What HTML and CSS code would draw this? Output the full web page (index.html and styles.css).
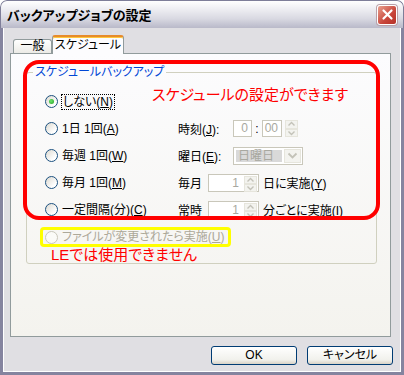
FILE: index.html
```html
<!DOCTYPE html>
<html lang="ja">
<head>
  <meta charset="UTF-8">
  <title>バックアップジョブの設定</title>
  <link rel="stylesheet" href="styles.css">
</head>
<body>
  <div class="window">
    <div class="titlebar">
      <span class="title">バックアップジョブの設定</span>
      <span class="close">
        <svg width="17" height="17" viewBox="0 0 17 17"><path d="M4.5 4.5 L12.5 12.5 M12.5 4.5 L4.5 12.5" stroke="#fff" stroke-width="2.2" stroke-linecap="round"/></svg>
      </span>
    </div>

    <div class="frame">
      <div class="tabs">
        <div class="tab">一般</div>
        <div class="tab tab-active">スケジュール</div>
      </div>

      <div class="panel">
        <fieldset class="group">
          <legend>スケジュールバックアップ</legend>

          <div class="rows">
            <div class="row">
              <label class="option"><span class="radio checked"></span><span class="focus">しない(<u>N</u>)</span></label>
              <span class="note-red">スケジュールの設定ができます</span>
            </div>

            <div class="row">
              <label class="option col-left"><span class="radio"></span><span>1日 1回(<u>A</u>)</span></label>
              <span class="field-label">時刻(<u>J</u>):</span>
              <span class="box time-h">0</span>
              <span class="colon">:</span>
              <span class="box time-m">00</span>
              <span class="spinner spinner-alone">
                <span class="spin-btn"><svg width="9" height="6" viewBox="0 0 9 6"><path d="M1.5 4.5 L4.5 1.5 L7.5 4.5" fill="none" stroke="#c3c2b8" stroke-width="1.4"/></svg></span>
                <span class="spin-btn"><svg width="9" height="6" viewBox="0 0 9 6"><path d="M1.5 1.5 L4.5 4.5 L7.5 1.5" fill="none" stroke="#c3c2b8" stroke-width="1.4"/></svg></span>
              </span>
            </div>

            <div class="row">
              <label class="option col-left"><span class="radio"></span><span>毎週 1回(<u>W</u>)</span></label>
              <span class="field-label">曜日(<u>E</u>):</span>
              <span class="combo">
                <span class="combo-text">日曜日</span>
                <span class="combo-btn"><svg width="11" height="7" viewBox="0 0 11 7"><path d="M1.5 1.5 L5.5 5.5 L9.5 1.5" fill="none" stroke="#c3c2b8" stroke-width="1.8"/></svg></span>
              </span>
            </div>

            <div class="row">
              <label class="option col-left"><span class="radio"></span><span>毎月 1回(<u>M</u>)</span></label>
              <span class="field-label short">毎月</span>
              <span class="spin">
                <span class="spin-value">1</span>
                <span class="spinner">
                  <span class="spin-btn"><svg width="9" height="6" viewBox="0 0 9 6"><path d="M1.5 4.5 L4.5 1.5 L7.5 4.5" fill="none" stroke="#c3c2b8" stroke-width="1.4"/></svg></span>
                  <span class="spin-btn"><svg width="9" height="6" viewBox="0 0 9 6"><path d="M1.5 1.5 L4.5 4.5 L7.5 1.5" fill="none" stroke="#c3c2b8" stroke-width="1.4"/></svg></span>
                </span>
              </span>
              <span class="after">日に実施(<u>Y</u>)</span>
            </div>

            <div class="row">
              <label class="option col-left"><span class="radio"></span><span>一定間隔(分)(<u>C</u>)</span></label>
              <span class="field-label short">常時</span>
              <span class="spin">
                <span class="spin-value">1</span>
                <span class="spinner">
                  <span class="spin-btn"><svg width="9" height="6" viewBox="0 0 9 6"><path d="M1.5 4.5 L4.5 1.5 L7.5 4.5" fill="none" stroke="#c3c2b8" stroke-width="1.4"/></svg></span>
                  <span class="spin-btn"><svg width="9" height="6" viewBox="0 0 9 6"><path d="M1.5 1.5 L4.5 4.5 L7.5 1.5" fill="none" stroke="#c3c2b8" stroke-width="1.4"/></svg></span>
                </span>
              </span>
              <span class="after">分ごとに実施(<u>I</u>)</span>
            </div>
          </div>

          <div class="hl-yellow">
            <label class="option disabled"><span class="radio"></span><span>ファイルが変更されたら実施(<u>U</u>)</span></label>
          </div>
          <div class="note-le">LEでは使用できません</div>
        </fieldset>

        <div class="hl-red"></div>
      </div>

      <div class="buttons">
        <button class="btn">OK</button>
        <button class="btn">キャンセル</button>
      </div>
    </div>
  </div>
</body>
</html>
```

FILE: styles.css
```css
* { box-sizing: border-box; }
body {
  margin: 0;
  background: #fff;
  font-family: "Liberation Sans", "Noto Sans CJK JP", sans-serif;
  font-size: 12px;
  font-feature-settings: "palt";
  color: #000;
}
.window {
  width: 404px;
  height: 375px;
  display: flex;
  flex-direction: column;
  background: #e0dfe3;
  border-radius: 7px 7px 0 0;
  overflow: hidden;
}
.titlebar {
  height: 28px;
  flex: none;
  display: flex;
  align-items: center;
  justify-content: space-between;
  padding: 0 6px 0 6px;
  border: 1px solid #7e7e99;
  border-bottom: none;
  border-radius: 7px 7px 0 0;
  background: linear-gradient(#ffffff 0%, #ebebf0 35%, #d9d9e2 65%, #b9b9c9 100%);
}
.title {
  font-size: 13px;
  font-weight: bold;
}
.close {
  width: 20px;
  height: 20px;
  display: flex;
  align-items: center;
  justify-content: center;
  border: 1px solid #fff;
  border-radius: 3px;
  background: linear-gradient(135deg, #e9a08e, #c8453a 60%, #b53128);
  box-shadow: 0 0 0 1px #b8a0a8;
}
.frame {
  flex: 1;
  display: flex;
  flex-direction: column;
  border: 3px solid #85849f;
  border-top: none;
  box-shadow: inset 1px 0 #fff, inset -1px 0 #fff, inset 0 -1px #fff;
  padding: 7px 10px 0 7px;
}
.tabs {
  height: 18px;
  display: flex;
  align-items: flex-end;
  padding-left: 3px;
}
.tab {
  width: 39px;
  height: 14px;
  border: 1px solid #919b9c;
  border-bottom: none;
  border-radius: 3px 3px 0 0;
  background: linear-gradient(#ffffff, #ecebe6);
  text-align: center;
  line-height: 13px;
}
.tab-active {
  position: relative;
  z-index: 1;
  width: 72px;
  height: 19px;
  margin-bottom: -1px;
  border-top: 2px solid #e68b2c;
  box-shadow: inset 0 1px #ffc83c;
  background: #fcfcfe;
  line-height: 16px;
}
.panel {
  position: relative;
  height: 284px;
  border: 1px solid #919b9c;
  background: linear-gradient(#fcfcfe, #f4f3ee);
  padding: 11px 13px 0 15px;
}
.group {
  margin: 0;
  padding: 0;
  height: 199px;
  border: 1px solid #d0d0bf;
  border-radius: 3px;
}
.group legend {
  margin-left: 6px;
  padding: 0 2px;
  line-height: 14px;
  color: #0046d5;
}
.rows {
  padding: 9px 0 0 18px;
}
.row {
  height: 27px;
  display: flex;
  align-items: center;
  white-space: nowrap;
}
.option {
  display: flex;
  align-items: center;
  gap: 4px;
  line-height: 14px;
  white-space: nowrap;
}
.col-left {
  width: 133px;
  flex: none;
}
.radio {
  width: 13px;
  height: 13px;
  flex: none;
  position: relative;
  border: 1px solid #1c5180;
  border-radius: 50%;
  background: linear-gradient(135deg, #dcd9d0, #ffffff 75%);
}
.radio.checked::after {
  content: "";
  position: absolute;
  left: 3px;
  top: 3px;
  width: 5px;
  height: 5px;
  border-radius: 50%;
  background: radial-gradient(circle at 40% 40%, #6ee46e, #21a121);
}
.focus {
  outline: 1px dotted #000;
  padding: 0 1px;
}
.note-red {
  align-self: flex-start;
  margin: -2px 0 0 38px;
  color: #f00;
  font-size: 15px;
  line-height: 18px;
}
.field-label {
  width: 55px;
  flex: none;
}
.field-label.short {
  width: 30px;
}
.box {
  height: 17px;
  border: 1px solid #c9c7ba;
  background: #fff;
  color: #a8a8a0;
  text-align: right;
  padding-right: 3px;
  line-height: 15px;
}
.time-h { width: 19px; }
.time-m { width: 20px; }
.colon {
  width: 10px;
  text-align: center;
}
.spinner {
  width: 13px;
  display: flex;
  flex-direction: column;
}
.spinner-alone {
  height: 17px;
  margin-left: 3px;
}
.spin-btn {
  flex: 1;
  display: flex;
  align-items: center;
  justify-content: center;
  background: #f3f3ef;
  border: 1px solid #e6e5dc;
}
.combo {
  width: 70px;
  height: 18px;
  display: flex;
  padding: 1px;
  border: 1px solid #c9c7ba;
  background: #fff;
}
.combo-text {
  flex: 1;
  margin: 1px 2px 1px 1px;
  padding-left: 2px;
  background: #d9d9d9;
  color: #a8a8a0;
  line-height: 13px;
}
.combo-btn {
  width: 17px;
  display: flex;
  align-items: center;
  justify-content: center;
  background: #f3f3ef;
  border: 1px solid #e6e5dc;
}
.spin {
  width: 51px;
  height: 18px;
  display: flex;
  padding: 1px;
  border: 1px solid #c9c7ba;
  background: #fff;
}
.spin-value {
  flex: 1;
  text-align: right;
  padding-right: 5px;
  color: #a8a8a0;
  line-height: 14px;
}
.after {
  margin-left: 4px;
}
.hl-yellow {
  width: fit-content;
  height: 20px;
  margin: 4px 0 0 13px;
  padding: 0 3px 0 2px;
  display: flex;
  align-items: center;
  border: 3px solid #ffff00;
  border-radius: 4px;
}
.disabled {
  color: #aca899;
}
.disabled .radio {
  border-color: #c9c7ba;
  background: #fbfbf8;
}
.note-le {
  margin-left: 24px;
  color: #f00;
  font-size: 15px;
  line-height: 16px;
}
.hl-red {
  position: absolute;
  left: 12px;
  top: 6px;
  width: 357px;
  height: 160px;
  border: 4px solid #f00;
  border-radius: 16px;
  pointer-events: none;
}
.buttons {
  display: flex;
  justify-content: flex-end;
  gap: 10px;
  margin: 9px -2px 0 0;
}
.btn {
  width: 86px;
  height: 19px;
  padding: 0;
  border: 1px solid #003c74;
  border-radius: 3px;
  background: linear-gradient(#ffffff, #f1f1ec 75%, #d8d2c6);
  font-family: "Liberation Sans", "Noto Sans CJK JP", sans-serif;
  font-size: 12px;
  font-feature-settings: "palt";
  line-height: 15px;
  color: #000;
}
```
